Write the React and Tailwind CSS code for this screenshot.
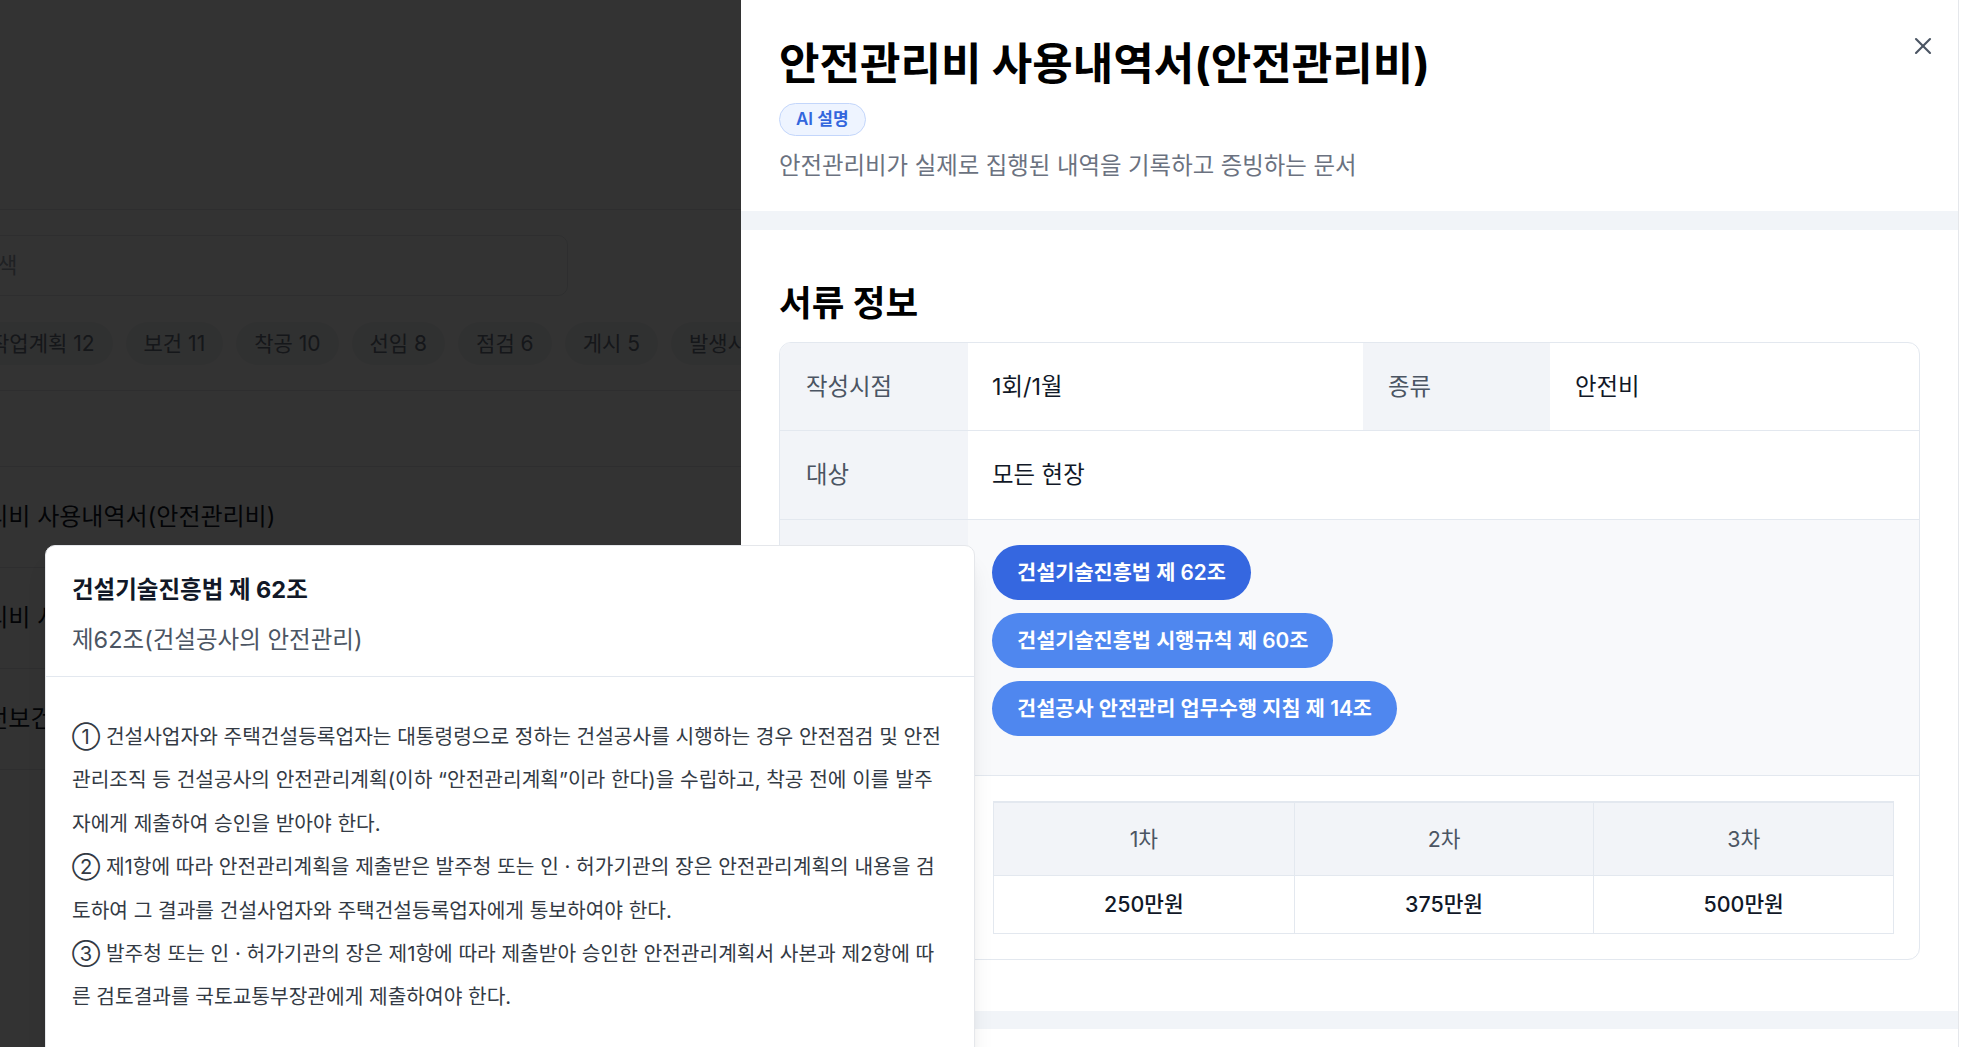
import { X, Search } from "lucide-react";

const chips = ["작업계획 12", "보건 11", "착공 10", "선임 8", "점검 6", "게시 5", "발생시 4", "교육 3"];

const docs = [
  "안전관리비 사용내역서(안전관리비)",
  "안전관리비 사용계획서(안전관리비)",
  "산업안전보건관리비 사용내역서",
];

const laws = [
  { label: "건설기술진흥법 제 62조", active: true },
  { label: "건설기술진흥법 시행규칙 제 60조" },
  { label: "건설공사 안전관리 업무수행 지침 제 14조" },
];

const rounds = [
  { round: "1차", amount: "250만원" },
  { round: "2차", amount: "375만원" },
  { round: "3차", amount: "500만원" },
];

const article = [
  [
    "① 건설사업자와 주택건설등록업자는 대통령령으로 정하는 건설공사를 시행하는 경우 안전점검 및 안전",
    "관리조직 등 건설공사의 안전관리계획(이하 “안전관리계획”이라 한다)을 수립하고, 착공 전에 이를 발주",
    "자에게 제출하여 승인을 받아야 한다.",
  ],
  [
    "② 제1항에 따라 안전관리계획을 제출받은 발주청 또는 인 · 허가기관의 장은 안전관리계획의 내용을 검",
    "토하여 그 결과를 건설사업자와 주택건설등록업자에게 통보하여야 한다.",
  ],
  [
    "③ 발주청 또는 인 · 허가기관의 장은 제1항에 따라 제출받아 승인한 안전관리계획서 사본과 제2항에 따",
    "른 검토결과를 국토교통부장관에게 제출하여야 한다.",
  ],
];

function BackPage() {
  return (
    <div className="h-full w-full bg-white">
      <div className="h-[210px] border-b border-[#e5e7eb]" />
      <div className="-ml-[80px] w-[1500px]">
        <div className="pt-[25px]">
          <div className="flex h-[61px] w-[648px] items-center gap-[16px] rounded-[10px] border border-[#e5e7eb] pl-[16px]">
            <Search size={24} className="text-[#9ca3af]" />
            <span className="text-[22px] text-[#9ca3af]">검색</span>
          </div>
        </div>
        <div className="flex gap-[13px] border-b border-[#e5e7eb] pt-[26px] pb-[25px] pl-[52px]">
          {chips.map((c) => (
            <span
              key={c}
              className="flex h-[43px] items-center rounded-full bg-[#f1f2f4] px-[18px] text-[21px] whitespace-nowrap text-[#6b7280]"
            >
              {c}
            </span>
          ))}
        </div>
        <div className="h-[76px] border-b border-[#e5e7eb]" />
        {docs.map((d) => (
          <div
            key={d}
            className="flex h-[101px] items-center border-b border-[#e5e7eb] text-[24px] text-[#111827]"
          >
            {d}
          </div>
        ))}
      </div>
    </div>
  );
}

function InfoTable() {
  return (
    <div className="overflow-hidden rounded-[12px] border border-[#e3e8ef]">
      <div className="grid h-[88px] grid-cols-[188px_395px_187px_1fr] border-b border-[#e3e8ef] text-[23.4px]">
        <div className="flex items-center bg-[#f2f4f8] px-[26px] text-[#4b5563]">작성시점</div>
        <div className="flex items-center px-[24px] text-[#111827]">1회/1월</div>
        <div className="flex items-center bg-[#f2f4f8] px-[25px] text-[#4b5563]">종류</div>
        <div className="flex items-center px-[25px] text-[#111827]">안전비</div>
      </div>
      <div className="grid h-[89px] grid-cols-[188px_1fr] border-b border-[#e3e8ef] text-[23.4px]">
        <div className="flex items-center bg-[#f2f4f8] px-[26px] text-[#4b5563]">대상</div>
        <div className="flex items-center px-[24px] text-[#111827]">모든 현장</div>
      </div>
      <div className="grid grid-cols-[188px_1fr] border-b border-[#e3e8ef] text-[23.4px]">
        <div className="flex items-center bg-[#f2f4f8] px-[26px] text-[#4b5563]">관련법령</div>
        <div className="flex flex-col items-start gap-[13px] bg-[#f8f9fb] pt-[25px] pb-[39px] pl-[24px]">
          {laws.map((l) => (
            <button
              key={l.label}
              className={
                "flex h-[55px] items-center rounded-full px-[25px] text-[20.8px] font-semibold whitespace-nowrap text-white " +
                (l.active ? "bg-[#3567e0]" : "bg-[#4f87ef]")
              }
            >
              {l.label}
            </button>
          ))}
        </div>
      </div>
      <div className="grid grid-cols-[188px_1fr] text-[21.4px]">
        <div className="flex items-center bg-white px-[26px] text-[#4b5563]">금액</div>
        <div className="pt-[25px] pr-[25px] pb-[25px] pl-[25px]">
          <div className="grid grid-cols-3 border border-t-2 border-[#e3e8ef]">
            {rounds.map((r, i) => (
              <div
                key={r.round}
                className={"flex flex-col " + (i > 0 ? "border-l border-[#e3e8ef]" : "")}
              >
                <div className="flex h-[73px] items-center justify-center border-b border-[#e3e8ef] bg-[#f2f4f8] text-[#4b5563]">
                  {r.round}
                </div>
                <div className="flex h-[57px] items-center justify-center font-medium text-[#111827]">
                  {r.amount}
                </div>
              </div>
            ))}
          </div>
        </div>
      </div>
    </div>
  );
}

function Drawer() {
  return (
    <div className="absolute top-0 right-0 flex h-full w-[1224px] bg-white">
      <div className="relative h-full w-[1218px] overflow-hidden border-r border-[#e5e7eb]">
        <button className="absolute top-[32px] right-[21px] text-[#4b5563]">
          <X size={28} strokeWidth={1.8} />
        </button>
        <div className="px-[38px] pt-[40px] pb-[30px]">
          <h1 className="text-[44px] leading-[48px] font-bold text-black">
            안전관리비 사용내역서(안전관리비)
          </h1>
          <span className="mt-[15px] inline-flex h-[33px] items-center rounded-full border border-[#c3d6fb] bg-[#eef4ff] px-[16px] text-[17px] font-semibold text-[#3366dd]">
            AI 설명
          </span>
          <p className="mt-[15px] text-[23.4px] leading-[30px] text-[#6b7280]">
            안전관리비가 실제로 집행된 내역을 기록하고 증빙하는 문서
          </p>
        </div>
        <div className="h-[19px] bg-[#f1f4f8]" />
        <div className="px-[38px] pt-[54px] pb-[51px]">
          <h2 className="text-[35.5px] leading-[40px] font-bold text-black">서류 정보</h2>
          <div className="mt-[18px]">
            <InfoTable />
          </div>
        </div>
        <div className="h-[18px] bg-[#f1f4f8]" />
        <div className="h-[200px] bg-white" />
      </div>
      <div className="h-full w-[6px] bg-white" />
    </div>
  );
}

function LawPopover() {
  return (
    <div className="absolute top-[545px] left-[45px] w-[930px] overflow-hidden rounded-[10px] border border-[#e5e7eb] bg-white shadow-xl">
      <div className="border-b border-[#e3e8ef] px-[26px] pt-[29px] pb-[21px]">
        <h3 className="text-[23.5px] leading-[30px] font-bold text-[#111827]">건설기술진흥법 제 62조</h3>
        <p className="mt-[20px] text-[23.5px] leading-[30px] text-[#4b5563]">제62조(건설공사의 안전관리)</p>
      </div>
      <div className="px-[26px] pt-[38px] pb-[60px] text-[20.3px] leading-[43.4px] text-[#333a44]">
        {article.map((para, i) => (
          <p key={i} className="whitespace-nowrap">
            {para.map((line, j) => (
              <span key={j} className="block">
                {line}
              </span>
            ))}
          </p>
        ))}
      </div>
    </div>
  );
}

export default function App() {
  return (
    <div className="relative h-[1047px] w-full overflow-hidden font-[family-name:Inter,'Noto_Sans_CJK_KR',sans-serif]">
      <BackPage />
      <div className="absolute inset-0 bg-black/80" />
      <Drawer />
      <LawPopover />
    </div>
  );
}
